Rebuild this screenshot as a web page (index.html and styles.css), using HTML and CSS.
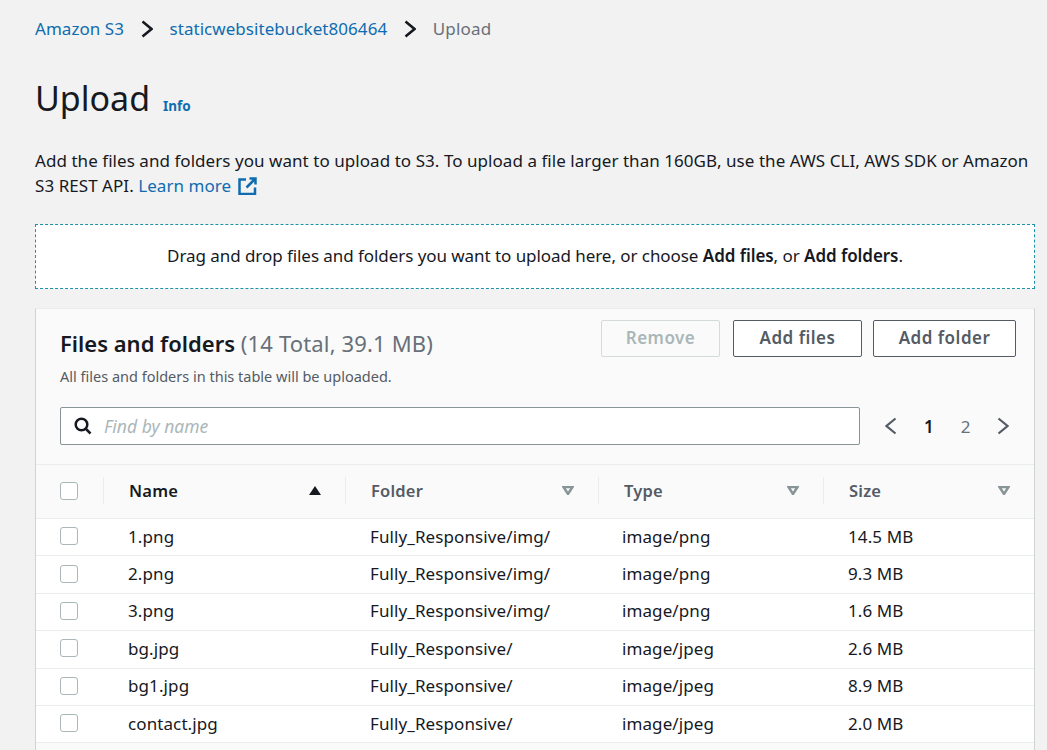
FILE: index.html
```html
<!DOCTYPE html>
<html lang="en">
<head>
    <meta charset="UTF-8">
    <meta name="viewport" content="width=device-width, initial-scale=1.0">
    <title>Upload</title>
    <link rel="stylesheet" href="styles.css">
</head>
<body>
    <nav class="crumbs">
        <a href="#">Amazon S3</a>
        <svg class="crumb-sep" viewBox="0 0 12 18"><path d="M1.500 1.500 10.500 9 1.500 16.500"/></svg>
        <a href="#">staticwebsitebucket806464</a>
        <svg class="crumb-sep" viewBox="0 0 12 18"><path d="M1.500 1.500 10.500 9 1.500 16.500"/></svg>
        <span class="crumb-current">Upload</span>
    </nav>

    <div class="title-row">
        <h1>Upload</h1>
        <a class="info" href="#">Info</a>
    </div>

    <p class="intro">Add the files and folders you want to upload to S3. To upload a file larger than 160GB, use the AWS CLI, AWS SDK or Amazon S3 REST API. <a href="#">Learn more</a><svg class="ext-icon" viewBox="0 0 19 18"><path d="M8 2.500H1.500v14.500h15.500V10.500"/><path d="M11.500 1.500h6v6M17 2 8.500 10.500"/></svg>
    </p>

    <div class="dropzone"><span>Drag and drop files and folders you want to upload here, or choose <b>Add files</b>, or <b>Add folders</b>.</span></div>

    <section class="panel">
        <div class="panel-head">
            <div class="panel-title">
                <h2>Files and folders <span>(14 Total, 39.1 MB)</span></h2>
                <p>All files and folders in this table will be uploaded.</p>
            </div>
            <div class="actions">
                <button class="btn btn-remove" disabled>Remove</button>
                <button class="btn btn-files">Add files</button>
                <button class="btn btn-folder">Add folder</button>
            </div>
        </div>

        <div class="toolbar">
            <div class="search">
                <svg class="search-icon" viewBox="0 0 18 18"><circle cx="7.500" cy="7.500" r="5.800"/><path d="M11.500 11.500 16.500 16.500"/></svg>
                <span>Find by name</span>
            </div>
            <div class="pager">
                <svg viewBox="0 0 12 18"><path d="M10.500 1.500 1.500 9l9 7.500"/></svg>
                <b>1</b>
                <span>2</span>
                <svg viewBox="0 0 12 18"><path d="M1.500 1.500 10.500 9l-9 7.500"/></svg>
            </div>
        </div>

        <table class="files">
            <colgroup>
                <col class="col-check"><col class="col-name"><col class="col-folder"><col class="col-type"><col class="col-size">
            </colgroup>
            <thead>
                <tr>
                    <th><i class="check"></i></th>
                    <th class="sorted"><div class="th-inner">Name <svg class="sort-up" viewBox="0 0 12 9"><path d="M6 0 12 9H0z"/></svg></div></th>
                    <th><div class="th-inner">Folder <svg class="sort" viewBox="0 0 12 9"><path d="M1.500 1h9L6 8z"/></svg></div></th>
                    <th><div class="th-inner">Type <svg class="sort" viewBox="0 0 12 9"><path d="M1.500 1h9L6 8z"/></svg></div></th>
                    <th><div class="th-inner">Size <svg class="sort" viewBox="0 0 12 9"><path d="M1.500 1h9L6 8z"/></svg></div></th>
                </tr>
            </thead>
            <tbody>
                <tr><td><i class="check"></i></td><td>1.png</td><td>Fully_Responsive/img/</td><td>image/png</td><td>14.5 MB</td></tr>
                <tr><td><i class="check"></i></td><td>2.png</td><td>Fully_Responsive/img/</td><td>image/png</td><td>9.3 MB</td></tr>
                <tr><td><i class="check"></i></td><td>3.png</td><td>Fully_Responsive/img/</td><td>image/png</td><td>1.6 MB</td></tr>
                <tr><td><i class="check"></i></td><td>bg.jpg</td><td>Fully_Responsive/</td><td>image/jpeg</td><td>2.6 MB</td></tr>
                <tr><td><i class="check"></i></td><td>bg1.jpg</td><td>Fully_Responsive/</td><td>image/jpeg</td><td>8.9 MB</td></tr>
                <tr><td><i class="check"></i></td><td>contact.jpg</td><td>Fully_Responsive/</td><td>image/jpeg</td><td>2.0 MB</td></tr>
            </tbody>
        </table>
    </section>
</body>
</html>
```

FILE: styles.css
```css
html, body {
    height: 750px;
    overflow: hidden;
}

body {
    margin: 0;
    padding: 17px 12px 0 35px;
    box-sizing: border-box;
    background-color: #f2f2f2;
    color: #16191f;
    font-family: "Noto Sans", "Open Sans", sans-serif;
    font-size: 17px;
}

a {
    color: #0f6cb0;
    text-decoration: none;
}

.crumbs {
    display: flex;
    align-items: center;
    height: 22px;
    letter-spacing: 0.05px;
}

.crumb-sep {
    width: 12px;
    height: 18px;
    margin: 2px 16.500px 0 17px;
    fill: none;
    stroke: #16191f;
    stroke-width: 2.500;
}

.crumb-current {
    color: #687078;
    letter-spacing: 0.2px;
}

.title-row {
    display: flex;
    align-items: baseline;
    margin-top: 36px;
}

h1 {
    margin: 0;
    font-size: 34px;
    font-weight: 400;
    line-height: 46px;
}

.info {
    margin-left: 13px;
    font-size: 13.500px;
    font-weight: 700;
}

.intro {
    margin: 27px 0 0;
    line-height: 25px;
    letter-spacing: 0.05px;
}

.ext-icon {
    width: 19px;
    height: 18px;
    margin-left: 7px;
    vertical-align: -3px;
    fill: none;
    stroke: #0f6cb0;
    stroke-width: 2.500;
}

.dropzone {
    margin-top: 26px;
    height: 65px;
    box-sizing: border-box;
    display: flex;
    align-items: center;
    justify-content: center;
    padding-bottom: 2px;
    border: 1px dashed #1c93a8;
    background-color: #fff;
    letter-spacing: -0.06px;
}

.dropzone b {
    font-weight: 600;
}

.panel {
    margin-top: 19px;
    height: 442px;
    box-sizing: border-box;
    background-color: #fafafa;
    border-left: 1px solid #cfd3d3;
    border-right: 1px solid #cfd3d3;
    border-top: 1px solid #eaeded;
}

.panel-head {
    display: flex;
    justify-content: space-between;
    padding: 11px 18px 0 24px;
}

h2 {
    margin: 8px 0 0;
    font-size: 22px;
    font-weight: 600;
    line-height: 30px;
}

h2 span {
    color: #687078;
    font-weight: 400;
    letter-spacing: 0.15px;
}

.panel-title p {
    margin: 9px 0 0;
    color: #545b64;
    font-size: 14.500px;
    line-height: 18px;
}

.actions {
    display: flex;
}

.btn {
    height: 37px;
    box-sizing: border-box;
    padding: 0 0 2px;
    background-color: #fff;
    border: 1px solid #545b64;
    border-radius: 2px;
    color: #545b64;
    font-family: inherit;
    font-size: 17px;
    font-weight: 600;
    letter-spacing: 0.5px;
}

.btn-remove {
    width: 119px;
    margin-right: 13px;
    background-color: #fafafa;
    border-color: #d5dbdb;
    color: #aab7b8;
}

.btn-files {
    width: 129px;
    margin-right: 11px;
}

.btn-folder {
    width: 143px;
}

.toolbar {
    display: flex;
    align-items: center;
    padding: 0 24px;
    margin-top: 22px;
}

.search {
    display: flex;
    align-items: center;
    width: 800px;
    height: 38px;
    box-sizing: border-box;
    padding-left: 13px;
    background-color: #fff;
    border: 1px solid #879596;
    border-radius: 2px;
    color: #aab7b8;
    font-size: 17.500px;
    font-style: italic;
}

.search-icon {
    width: 18px;
    height: 18px;
    margin-right: 12px;
    fill: none;
    stroke: #16191f;
    stroke-width: 2.500;
}

.pager {
    display: flex;
    align-items: center;
    margin-left: 25px;
    color: #687078;
}

.pager svg {
    width: 12px;
    height: 18px;
    fill: none;
    stroke: #545b64;
    stroke-width: 2.200;
}

.pager b {
    margin: 0 27px;
    color: #16191f;
    font-weight: 600;
}

.pager span {
    margin-right: 27px;
}

.files {
    width: 100%;
    margin-top: 19px;
    table-layout: fixed;
    border-collapse: collapse;
    border-top: 1px solid #eaeded;
}

.col-check { width: 67px; }
.col-name { width: 242px; }
.col-folder { width: 253px; }
.col-type { width: 225px; }

th {
    height: 51px;
    padding: 0 0 2px;
    border-bottom: 1px solid #eaeded;
    color: #545b64;
    font-size: 16.500px;
    font-weight: 600;
    letter-spacing: 0.2px;
    text-align: left;
}

th.sorted {
    color: #16191f;
}

.th-inner {
    display: flex;
    align-items: center;
    justify-content: space-between;
    height: 27px;
    padding: 0 24px 0 25px;
    border-left: 1px solid #eaeded;
}

.sort-up {
    width: 12px;
    height: 9px;
    fill: #16191f;
}

.sort {
    width: 12px;
    height: 9px;
    fill: none;
    stroke: #879596;
    stroke-width: 2.500;
}

td {
    height: 34.400px;
    padding: 0 0 2px 25px;
    background-color: #fff;
    border-bottom: 1px solid #eaeded;
    letter-spacing: 0.1px;
}

td:nth-child(4) {
    padding-left: 24px;
}

td:first-child,
th:first-child {
    padding: 0 0 2px 24px;
}

.check {
    display: block;
    width: 16px;
    height: 16px;
    background-color: #fff;
    border: 1px solid #aab7b8;
    border-radius: 3px;
}
```
